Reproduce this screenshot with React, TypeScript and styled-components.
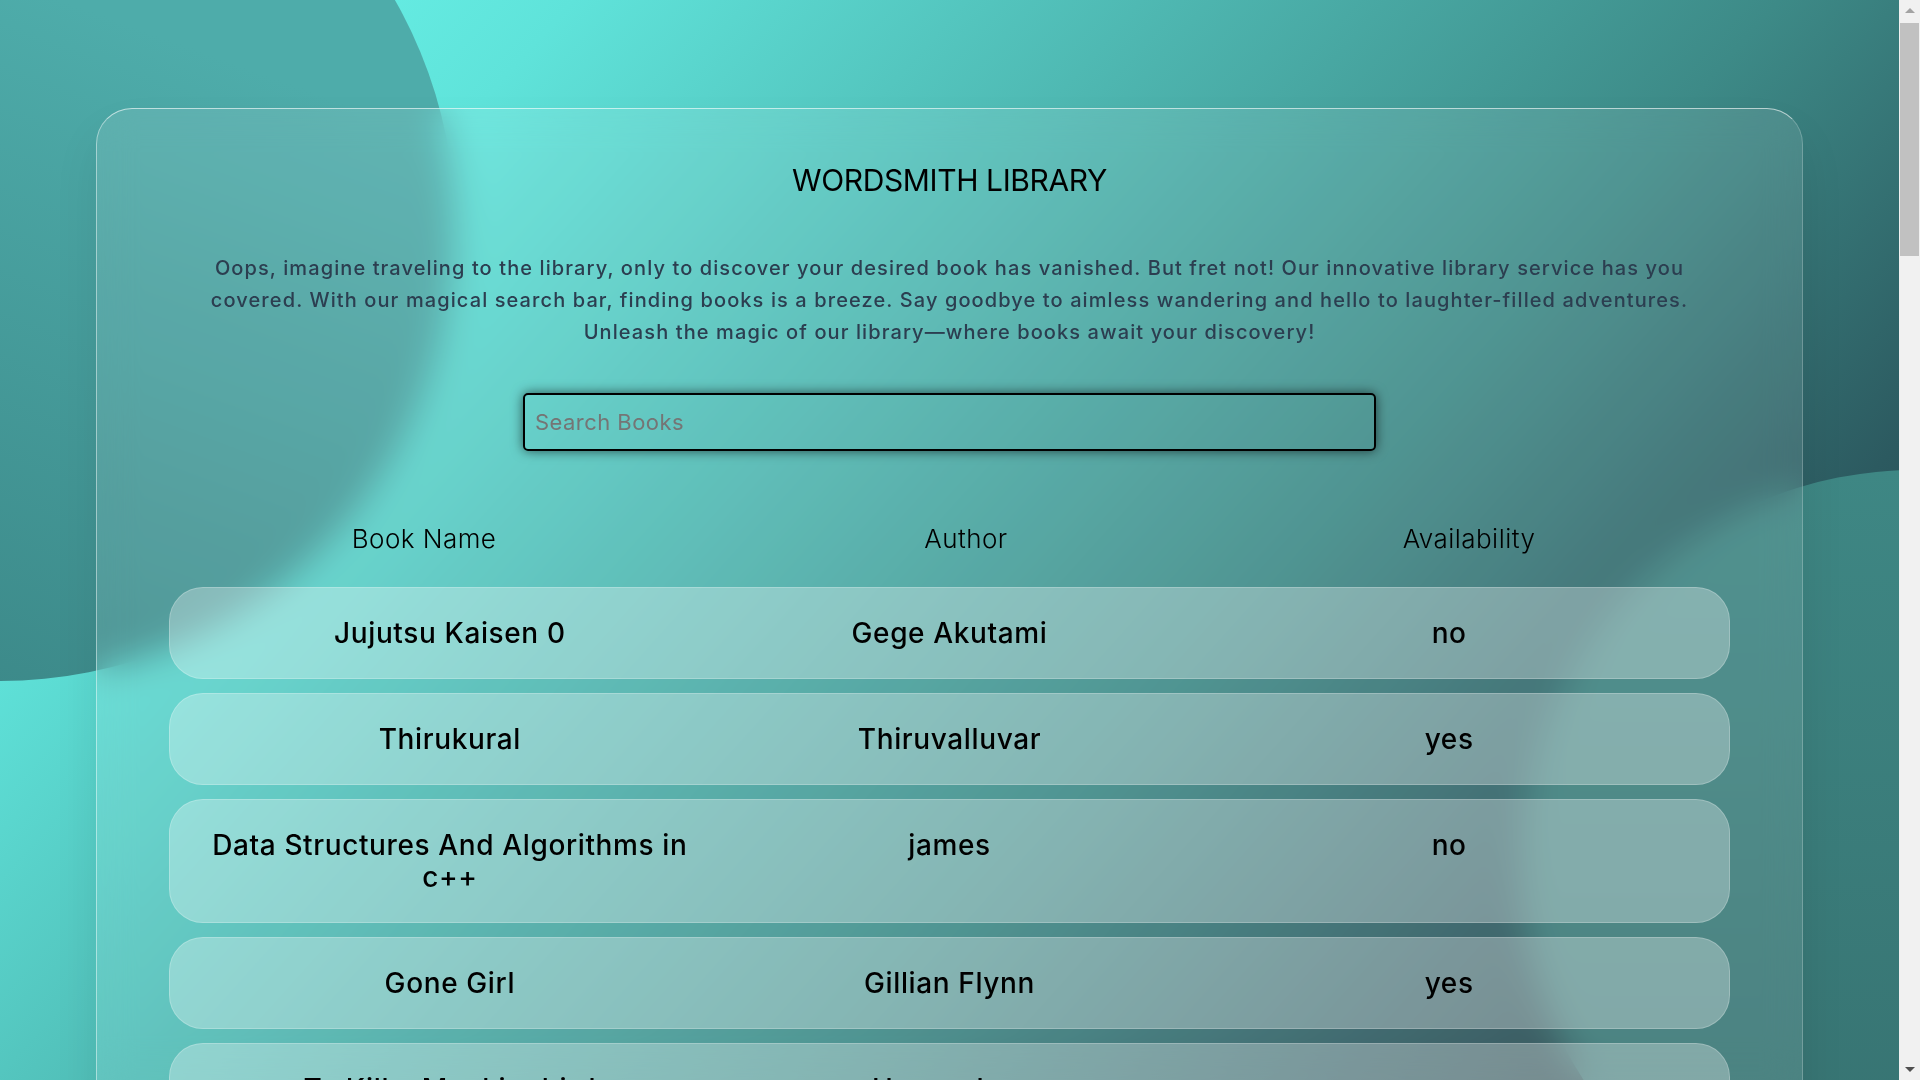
import React from "react";
import styled, { createGlobalStyle } from "styled-components";

const GlobalStyle = createGlobalStyle`
  html, body { margin: 0; padding: 0; }
  body {
    font-family: "Inter", "Open Sans", sans-serif;
    color: #000;
  }
  * { box-sizing: border-box; }
`;

const Backdrop = styled.div`
  position: fixed;
  top: 0;
  left: 0;
  bottom: 0;
  right: 21px;
  z-index: 0;
  overflow: hidden;
  background: linear-gradient(
    132deg,
    #6ffbf0 0%,
    #5fe3da 20%,
    #3d8a87 62%,
    #2c5a60 80%,
    #1d3036 100%
  );
`;

const Circle = styled.div<{ $left: number; $top: number; $size: number; $fill: string }>`
  position: absolute;
  left: ${(p) => p.$left}px;
  top: ${(p) => p.$top}px;
  width: ${(p) => p.$size}px;
  height: ${(p) => p.$size}px;
  border-radius: 50%;
  background: ${(p) => p.$fill};
`;

const ScrollTrack = styled.div`
  position: fixed;
  top: 0;
  right: 0;
  width: 21px;
  height: 100vh;
  z-index: 5;
  background: #f1f1f1;
  display: flex;
  flex-direction: column;
  align-items: center;
`;

const ScrollArrow = styled.div<{ $down?: boolean }>`
  height: 21px;
  width: 100%;
  display: flex;
  align-items: center;
  justify-content: center;

  &::before {
    content: "";
    width: 0;
    height: 0;
    border-left: 5px solid transparent;
    border-right: 5px solid transparent;
    ${(p) =>
      p.$down
        ? "border-top: 5px solid #505050;"
        : "border-bottom: 5px solid #a3a3a3;"}
  }
`;

const ScrollThumb = styled.div`
  margin-top: 2px;
  width: 19px;
  height: 233px;
  background: #c1c1c1;
`;

const ScrollSpacer = styled.div`
  flex: 1;
`;

const Page = styled.main`
  position: relative;
  z-index: 1;
  padding: 108px 0 108px 96px;
`;

const Card = styled.section`
  width: 1707px;
  padding: 53px 72px 60px;
  border-radius: 36px;
  background: rgba(255, 255, 255, 0.1);
  backdrop-filter: blur(18px);
  border: 1px solid rgba(255, 255, 255, 0.22);
  border-top-color: rgba(255, 255, 255, 0.6);
  border-left-color: rgba(255, 255, 255, 0.45);
  box-shadow: 0 25px 45px rgba(0, 0, 0, 0.08);
  display: flex;
  flex-direction: column;
  align-items: center;
`;

const Title = styled.h1`
  margin: 0;
  font-size: 30px;
  line-height: 36px;
  font-weight: 400;
  letter-spacing: -0.4px;
  color: #000;
  text-align: center;
`;

const Intro = styled.p`
  margin: 54px 0 0;
  font-size: 20px;
  line-height: 32px;
  font-weight: 500;
  letter-spacing: 1.1px;
  color: #2c3e50;
  text-align: center;
  white-space: nowrap;
`;

const SearchInput = styled.input`
  margin-top: 45px;
  width: 853px;
  height: 58px;
  padding: 0 10px;
  border: 2px solid #000;
  border-radius: 5px;
  background: transparent;
  box-shadow: 0 0 12px rgba(0, 0, 0, 0.6);
  font-family: "Inter", "Open Sans", sans-serif;
  font-size: 22px;
  letter-spacing: 0.45px;
  color: #000;
  outline: none;

  &::placeholder {
    color: #757575;
  }
`;

const Table = styled.div`
  width: 100%;
  margin-top: 70px;
  display: flex;
  flex-direction: column;
`;

const HeaderRow = styled.div`
  display: grid;
  grid-template-columns: 510px 574px 432px;
  margin-bottom: 30px;
`;

const HeaderCell = styled.div`
  font-size: 26px;
  line-height: 36px;
  font-weight: 300;
  letter-spacing: 0.45px;
  text-align: center;
  color: #000;
`;

const List = styled.div`
  display: flex;
  flex-direction: column;
  gap: 14px;
`;

const Row = styled.div`
  display: grid;
  grid-template-columns: repeat(3, 1fr);
  padding: 29px 30px;
  border-radius: 34px;
  background: rgba(255, 255, 255, 0.3);
  border: 1px solid rgba(255, 255, 255, 0.22);
`;

const Cell = styled.div`
  font-size: 28px;
  line-height: 32px;
  font-weight: 500;
  letter-spacing: 0.62px;
  text-align: center;
  color: #000;
`;

type Book = { name: string; author: string; available: string };

const books: Book[] = [
  { name: "Jujutsu Kaisen 0", author: "Gege Akutami", available: "no" },
  { name: "Thirukural", author: "Thiruvalluvar", available: "yes" },
  { name: "Data Structures And Algorithms in c++", author: "james", available: "no" },
  { name: "Gone Girl", author: "Gillian Flynn", available: "yes" },
  { name: "To Kill a Mockingbird", author: "Harper Lee", available: "yes" },
  { name: "1984", author: "George Orwell", available: "no" },
  { name: "Pride and Prejudice", author: "Jane Austen", available: "yes" },
  { name: "The Great Gatsby", author: "F. Scott Fitzgerald", available: "yes" },
  { name: "The Alchemist", author: "Paulo Coelho", available: "no" },
  { name: "Harry Potter", author: "J.K. Rowling", available: "yes" },
  { name: "The Hobbit", author: "J.R.R. Tolkien", available: "yes" },
  { name: "Ponniyin Selvan", author: "Kalki Krishnamurthy", available: "no" },
  { name: "Wings of Fire", author: "A.P.J. Abdul Kalam", available: "yes" },
  { name: "Atomic Habits", author: "James Clear", available: "yes" },
  { name: "The Catcher in the Rye", author: "J.D. Salinger", available: "no" },
  { name: "Sapiens", author: "Yuval Noah Harari", available: "yes" },
  { name: "Naruto", author: "Masashi Kishimoto", available: "yes" },
  { name: "One Piece", author: "Eiichiro Oda", available: "no" },
  { name: "Clean Code", author: "Robert C. Martin", available: "yes" },
  { name: "The Da Vinci Code", author: "Dan Brown", available: "yes" },
  { name: "Dune", author: "Frank Herbert", available: "no" },
  { name: "The Kite Runner", author: "Khaled Hosseini", available: "yes" },
  { name: "Rich Dad Poor Dad", author: "Robert Kiyosaki", available: "yes" },
  { name: "The Silent Patient", author: "Alex Michaelides", available: "no" },
  { name: "Ikigai", author: "Hector Garcia", available: "yes" },
  { name: "Death Note", author: "Tsugumi Ohba", available: "yes" },
  { name: "Brave New World", author: "Aldous Huxley", available: "no" },
  { name: "Animal Farm", author: "George Orwell", available: "yes" },
  { name: "Little Women", author: "Louisa May Alcott", available: "yes" },
  { name: "The Psychology of Money", author: "Morgan Housel", available: "yes" },
  { name: "Attack on Titan", author: "Hajime Isayama", available: "no" },
  { name: "Demon Slayer", author: "Koyoharu Gotouge", available: "yes" },
  { name: "The Monk Who Sold His Ferrari", author: "Robin Sharma", available: "yes" },
  { name: "Introduction to Algorithms", author: "Thomas H. Cormen", available: "no" },
  { name: "Moby Dick", author: "Herman Melville", available: "yes" },
  { name: "Frankenstein", author: "Mary Shelley", available: "no" },
];

export default function App() {
  return (
    <>
      <GlobalStyle />
      <Backdrop>
        <Circle
          $left={-455}
          $top={-229}
          $size={910}
          $fill="linear-gradient(200deg, #4eacaa 30%, #3b8787 92%)"
        />
        <Circle
          $left={1520}
          $top={470}
          $size={790}
          $fill="linear-gradient(180deg, #3e8784 0%, #36706f 100%)"
        />
      </Backdrop>
      <ScrollTrack aria-hidden="true">
        <ScrollArrow />
        <ScrollThumb />
        <ScrollSpacer />
        <ScrollArrow $down />
      </ScrollTrack>
      <Page>
        <Card>
          <Title>WORDSMITH LIBRARY</Title>
          <Intro>
            Oops, imagine traveling to the library, only to discover your desired book has vanished. But fret not! Our innovative library service has you
            <br />
            covered. With our magical search bar, finding books is a breeze. Say goodbye to aimless wandering and hello to laughter-filled adventures.
            <br />
            Unleash the magic of our library—where books await your discovery!
          </Intro>
          <SearchInput type="text" placeholder="Search Books" />
          <Table>
            <HeaderRow>
              <HeaderCell>Book Name</HeaderCell>
              <HeaderCell>Author</HeaderCell>
              <HeaderCell>Availability</HeaderCell>
            </HeaderRow>
            <List>
              {books.map((b) => (
                <Row key={b.name}>
                  <Cell>{b.name}</Cell>
                  <Cell>{b.author}</Cell>
                  <Cell>{b.available}</Cell>
                </Row>
              ))}
            </List>
          </Table>
        </Card>
      </Page>
    </>
  );
}
